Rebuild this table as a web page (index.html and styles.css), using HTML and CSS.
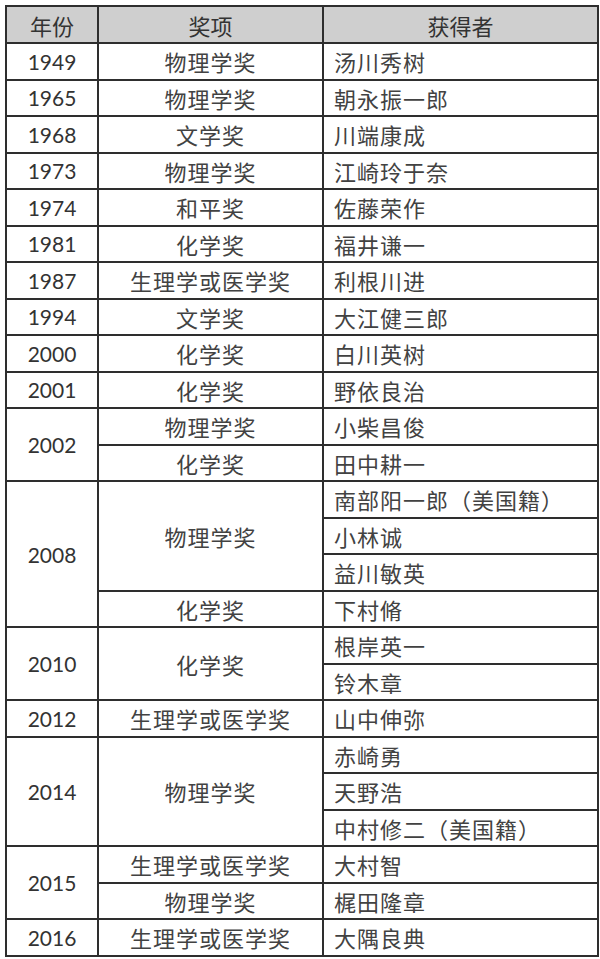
FILE: index.html
```html
<!DOCTYPE html>
<html lang="zh">
<head>
<meta charset="utf-8">
<title>日本诺贝尔奖获得者</title>
<link rel="stylesheet" href="styles.css">
</head>
<body>
<div class="page">
<table class="prize-table">
  <colgroup>
    <col class="c-year">
    <col class="c-award">
    <col class="c-name">
  </colgroup>
  <thead>
    <tr><th>年份</th><th>奖项</th><th>获得者</th></tr>
  </thead>
  <tbody>
    <tr><td class="year">1949</td><td class="award">物理学奖</td><td class="name">汤川秀树</td></tr>
    <tr><td class="year">1965</td><td class="award">物理学奖</td><td class="name">朝永振一郎</td></tr>
    <tr><td class="year">1968</td><td class="award">文学奖</td><td class="name">川端康成</td></tr>
    <tr><td class="year">1973</td><td class="award">物理学奖</td><td class="name">江崎玲于奈</td></tr>
    <tr><td class="year">1974</td><td class="award">和平奖</td><td class="name">佐藤荣作</td></tr>
    <tr><td class="year">1981</td><td class="award">化学奖</td><td class="name">福井谦一</td></tr>
    <tr><td class="year">1987</td><td class="award">生理学或医学奖</td><td class="name">利根川进</td></tr>
    <tr><td class="year">1994</td><td class="award">文学奖</td><td class="name">大江健三郎</td></tr>
    <tr><td class="year">2000</td><td class="award">化学奖</td><td class="name">白川英树</td></tr>
    <tr><td class="year">2001</td><td class="award">化学奖</td><td class="name">野依良治</td></tr>
    <tr><td class="year" rowspan="2">2002</td><td class="award">物理学奖</td><td class="name">小柴昌俊</td></tr>
    <tr><td class="award">化学奖</td><td class="name">田中耕一</td></tr>
    <tr><td class="year" rowspan="4">2008</td><td class="award" rowspan="3">物理学奖</td><td class="name">南部阳一郎（美国籍）</td></tr>
    <tr><td class="name">小林诚</td></tr>
    <tr><td class="name">益川敏英</td></tr>
    <tr><td class="award">化学奖</td><td class="name">下村脩</td></tr>
    <tr><td class="year" rowspan="2">2010</td><td class="award" rowspan="2">化学奖</td><td class="name">根岸英一</td></tr>
    <tr><td class="name">铃木章</td></tr>
    <tr><td class="year">2012</td><td class="award">生理学或医学奖</td><td class="name">山中伸弥</td></tr>
    <tr><td class="year" rowspan="3">2014</td><td class="award" rowspan="3">物理学奖</td><td class="name">赤崎勇</td></tr>
    <tr><td class="name">天野浩</td></tr>
    <tr><td class="name">中村修二（美国籍）</td></tr>
    <tr><td class="year" rowspan="2">2015</td><td class="award">生理学或医学奖</td><td class="name">大村智</td></tr>
    <tr><td class="award">物理学奖</td><td class="name">梶田隆章</td></tr>
    <tr><td class="year">2016</td><td class="award">生理学或医学奖</td><td class="name">大隅良典</td></tr>
  </tbody>
</table>
</div>
</body>
</html>
```

FILE: styles.css
```css
html, body {
  margin: 0;
  padding: 0;
  background: #ffffff;
}

.page {
  padding: 5px 0 0 5px;
}

.prize-table {
  border-collapse: collapse;
  table-layout: fixed;
  width: 592px;
  border: 2px solid #2e2e2e;
  font-family: "Noto Sans CJK SC", "Noto Sans", sans-serif;
  color: #424242;
}

.c-year { width: 92px; }
.c-award { width: 225px; }
.c-name { width: 275px; }

.prize-table th,
.prize-table td {
  border: 2px solid #2e2e2e;
  padding: 0;
  height: 34.5px;
  line-height: 1;
  vertical-align: middle;
}

.prize-table th {
  background: #cfcfcf;
  font-weight: 400;
  font-size: 22px;
  color: #333333;
  text-align: center;
  height: 35px;
}

.prize-table td.year {
  font-family: "Lato", "Open Sans", sans-serif;
  font-size: 21px;
  text-align: center;
  color: #333333;
}

.prize-table td.award {
  font-size: 22px;
  letter-spacing: 1px;
  text-align: center;
}

.prize-table td.name {
  font-size: 22px;
  letter-spacing: 1px;
  text-align: left;
  padding-left: 10px;
}
```
